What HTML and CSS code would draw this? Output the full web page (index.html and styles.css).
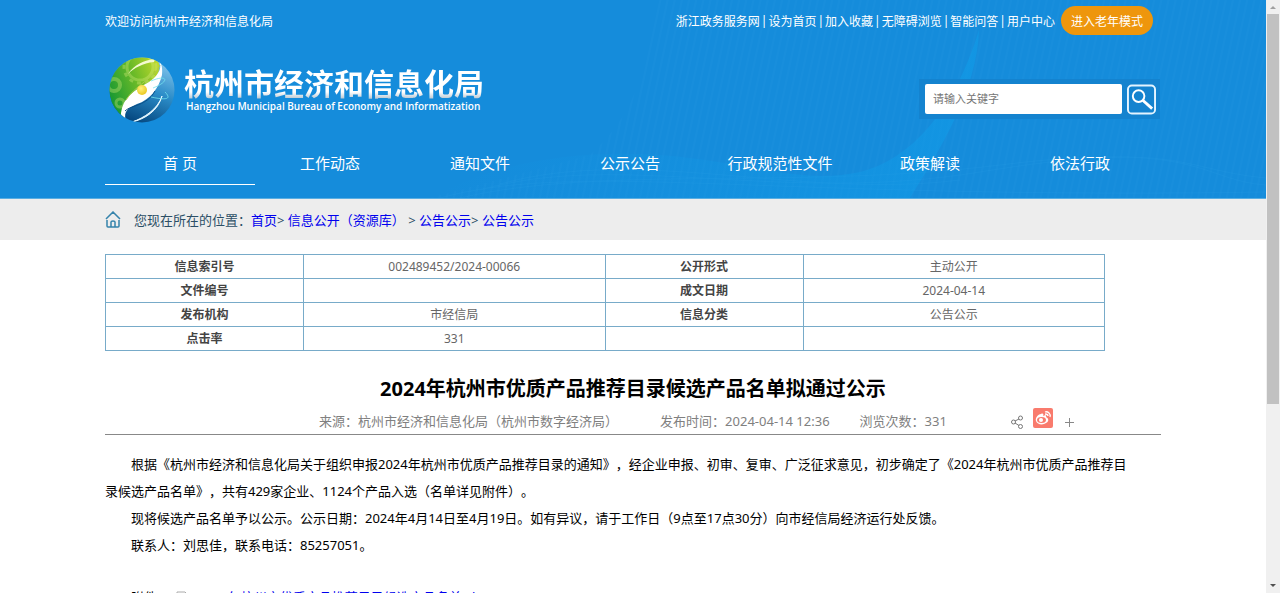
FILE: index.html
```html
<!DOCTYPE html>
<html lang="zh-CN">
<head>
    <meta charset="UTF-8">
    <meta name="viewport" content="width=device-width, initial-scale=1.0">
    <title>2024年杭州市优质产品推荐目录候选产品名单拟通过公示</title>
    <link rel="stylesheet" href="styles.css">
</head>
<body>
    <div class="page">
        <header class="header">
            <svg class="header-bg" viewBox="0 0 1266 198" preserveAspectRatio="xMaxYMid slice" aria-hidden="true">
                <defs>
                    <pattern id="lines" width="7" height="40" patternUnits="userSpaceOnUse" patternTransform="rotate(12)">
                        <path d="M2 0V40" stroke="#2a9ae4" stroke-width="2" opacity="0.12"/>
                    </pattern>
                    <linearGradient id="ribbon" x1="0" y1="0" x2="1" y2="0">
                        <stop offset="0" stop-color="#109ce8" stop-opacity="0"/>
                        <stop offset="0.6" stop-color="#109ce8" stop-opacity="0.3"/>
                        <stop offset="1" stop-color="#109ce8" stop-opacity="0.6"/>
                    </linearGradient>
                </defs>
                <path d="M655 0C648 60 640 110 590 155L430 198H1266V0Z" fill="url(#lines)"/>
                <path d="M430 198C500 160 580 150 660 155C750 162 800 185 860 172C910 160 955 110 979 30C977 90 940 150 910 198Z" fill="url(#ribbon)"/>
                <g fill="none" stroke="#30a4e8" stroke-width="1" opacity="0.15">
                    <path d="M440 198C580 160 760 200 1266 192"/>
                    <path d="M460 198C600 165 800 190 1000 165S1200 180 1266 185"/>
                    <path d="M480 190C620 150 780 205 980 172S1180 170 1266 178"/>
                    <path d="M500 184C640 145 800 200 960 180"/>
                </g>
            </svg>

            <div class="container header-inner">
                <div class="topbar">
                    <span>欢迎访问杭州市经济和信息化局</span>
                    <div class="toplinks">
                        <a href="#">浙江政务服务网</a><span class="sep">|</span>
                        <a href="#">设为首页</a><span class="sep">|</span>
                        <a href="#">加入收藏</a><span class="sep">|</span>
                        <a href="#">无障碍浏览</a><span class="sep">|</span>
                        <a href="#">智能问答</a><span class="sep">|</span>
                        <a href="#">用户中心</a>
                        <button type="button" class="old-btn">进入老年模式</button>
                    </div>
                </div>

                <div class="brand-row">
                    <a href="#" class="brand">
                        <svg class="logo" viewBox="0 0 66 66" aria-hidden="true">
                            <defs>
                                <clipPath id="ball"><circle cx="33" cy="33" r="32.5"/></clipPath>
                                <linearGradient id="green" x1="0" y1="0.5" x2="1" y2="0">
                                    <stop offset="0" stop-color="#1c9a32"/>
                                    <stop offset="0.5" stop-color="#6cbb28"/>
                                    <stop offset="1" stop-color="#c9dc2c"/>
                                </linearGradient>
                                <linearGradient id="blue" x1="0.8" y1="0" x2="0.4" y2="1">
                                    <stop offset="0" stop-color="#8dcbf0"/>
                                    <stop offset="0.5" stop-color="#2b8cc8"/>
                                    <stop offset="1" stop-color="#04467e"/>
                                </linearGradient>
                                <radialGradient id="sun" cx="0.4" cy="0.35" r="0.7">
                                    <stop offset="0" stop-color="#fff27a"/>
                                    <stop offset="1" stop-color="#e9c51c"/>
                                </radialGradient>
                            </defs>
                            <g clip-path="url(#ball)">
                                <rect width="66" height="66" fill="url(#blue)"/>
                                <path d="M0 0H46C54 8 50 19 42 25C28 34 14 40 14 62L0 66Z" fill="url(#green)"/>
                                <g fill="none" stroke="#d8ee7c" opacity="0.35">
                                    <circle cx="31" cy="10" r="13" stroke-width="3"/>
                                    <circle cx="31" cy="10" r="16" stroke-width="3" stroke-dasharray="4 4"/>
                                    <circle cx="5" cy="28" r="6" stroke-width="4"/>
                                    <circle cx="11" cy="46" r="4" stroke-width="3"/>
                                </g>
                                <path d="M46 1C57 8 49 19 40 25C24 34 14 41 12 56C12 61 14 64 18 66C14 57 16 52 28 47C41 43 50 31 53 18C54 9 52 4 46 1Z" fill="#fff"/>
                                <path d="M46 2C35 3 25 8 19 17C25 11 34 6 45 5Z" fill="#f4fad0"/>
                                <path d="M51 8C47 20 25 29 17 43" fill="none" stroke="#a9cc4c" stroke-width="1"/>
                                <path d="M16 54C22 48 38 49 46 34" fill="none" stroke="#0b4f87" stroke-width="1"/>
                                <path d="M53 39C49 52 35 61 23 65C36 62 49 54 53 39Z" fill="#e6f8ff" stroke="#e6f8ff" stroke-width="1"/>
                                <path d="M42 40C60 44 62 41 56 35M42 24C58 17 62 24 44 31" fill="none" stroke="#75e2ee" stroke-width="1" opacity="0.8"/>
                                <circle cx="33" cy="33" r="5" fill="url(#sun)"/>
                            </g>
                        </svg>
                        <span class="brand-text">
                            <span class="brand-name">杭州市经济和信息化局</span>
                            <span class="brand-en">Hangzhou Municipal Bureau of Economy and Informatization</span>
                        </span>
                    </a>

                    <form class="search">
                        <input type="text" class="search-input" placeholder="请输入关键字" aria-label="请输入关键字">
                        <button type="submit" class="search-btn" aria-label="搜索">
                            <svg viewBox="0 0 30 31" aria-hidden="true">
                                <rect x="1" y="1" width="28" height="29" rx="4" fill="none" stroke="#e4f4ff" stroke-width="2"/>
                                <circle cx="12" cy="12" r="6" fill="none" stroke="#fff" stroke-width="2"/>
                                <path d="M16 16L26 25" stroke="#fff" stroke-width="3"/>
                            </svg>
                        </button>
                    </form>
                </div>

                <nav class="nav">
                    <a href="#" class="active">首 页</a>
                    <a href="#">工作动态</a>
                    <a href="#">通知文件</a>
                    <a href="#">公示公告</a>
                    <a href="#">行政规范性文件</a>
                    <a href="#">政策解读</a>
                    <a href="#">依法行政</a>
                </nav>
            </div>
        </header>

        <div class="crumb-bar">
            <div class="container crumbs">
                <svg class="home" viewBox="0 0 16 17" aria-hidden="true">
                    <path d="M1 8L8 1L15 8M2 9V15Q2 16 3 16H13Q14 16 14 15V9M6 16V11Q6 10 8 10T10 11V16" fill="none" stroke="#3583ab" stroke-width="1.5"/>
                </svg>
                <span>您现在所在的位置：<a href="#">首页</a>&gt; <a href="#">信息公开（资源库）</a> &gt; <a href="#">公告公示</a>&gt; <a href="#">公告公示</a></span>
            </div>
        </div>

        <main class="container">
            <table class="info">
                <tr>
                    <th>信息索引号</th><td>002489452/2024-00066</td>
                    <th>公开形式</th><td>主动公开</td>
                </tr>
                <tr>
                    <th>文件编号</th><td></td>
                    <th>成文日期</th><td>2024-04-14</td>
                </tr>
                <tr>
                    <th>发布机构</th><td>市经信局</td>
                    <th>信息分类</th><td>公告公示</td>
                </tr>
                <tr>
                    <th>点击率</th><td>331</td>
                    <th></th><td></td>
                </tr>
            </table>

            <h1 class="title">2024年杭州市优质产品推荐目录候选产品名单拟通过公示</h1>
            <div class="meta">
                <div class="meta-text">
                    <span>来源：杭州市经济和信息化局（杭州市数字经济局）</span>
                    <span class="time">发布时间：2024-04-14 12:36</span>
                    <span>浏览次数：331</span>
                </div>
                <div class="share">
                    <a href="#" aria-label="分享">
                        <svg class="share-icon" viewBox="0 0 12 14" aria-hidden="true">
                            <g fill="none" stroke="#777" stroke-width="1">
                                <circle cx="2.5" cy="7" r="2"/>
                                <circle cx="9.5" cy="3" r="2"/>
                                <circle cx="9.5" cy="11.5" r="2"/>
                                <path d="M4 6L8 4M4 8L8 10.500"/>
                            </g>
                        </svg>
                    </a>
                    <a href="#" class="weibo" aria-label="微博">
                        <svg viewBox="0 0 20 20" aria-hidden="true">
                            <path d="M8 6C5 6 2 10 3 13C4 16 8 17 11 16C14 15 16 13 15 11C15 10 14 10 13 9C14 7 12 7 10 8C11 6 10 5 8 6Z" fill="#fff"/>
                            <ellipse cx="8.500" cy="12" rx="4.500" ry="3" fill="#f97b6d"/>
                            <circle cx="8" cy="12" r="2" fill="#fff"/>
                            <path d="M12 4C15 3 18 6 17 9M12 6C14 6 15 7 15 8" fill="none" stroke="#fff" stroke-width="1.300"/>
                        </svg>
                    </a>
                    <a href="#" aria-label="更多">
                        <svg class="plus" viewBox="0 0 9 10" aria-hidden="true">
                            <path d="M0 5.500H9M4.500 1V10" stroke="#888" stroke-width="1"/>
                        </svg>
                    </a>
                </div>
            </div>

            <article class="content">
                <p>根据《杭州市经济和信息化局关于组织申报2024年杭州市优质产品推荐目录的通知》，经企业申报、初审、复审、广泛征求意见，初步确定了《2024年杭州市优质产品推荐目录候选产品名单》，共有429家企业、1124个产品入选（名单详见附件）。</p>
                <p>现将候选产品名单予以公示。公示日期：2024年4月14日至4月19日。如有异议，请于工作日（9点至17点30分）向市经信局经济运行处反馈。</p>
                <p>联系人：刘思佳，联系电话：85257051。</p>
                <p class="attachment">附件：<svg class="file-icon" viewBox="0 0 14 16" aria-hidden="true"><path d="M2 1H10L13 4V15H2Z" fill="#fff" stroke="#aaa"/><rect y="2" width="9" height="10" fill="#82b96a"/></svg><a href="#">2024年杭州市优质产品推荐目录候选产品名单.xls</a></p>
            </article>
        </main>
    </div>

    <div class="scrollbar" aria-hidden="true">
        <svg class="arrow" viewBox="0 0 14 14"><path d="M4 9H10L7 6Z" fill="#a0a0a0"/></svg>
        <div class="track"><div class="thumb"></div></div>
        <svg class="arrow" viewBox="0 0 14 14"><path d="M4 5H10L7 8Z" fill="#505050"/></svg>
    </div>
</body>
</html>
```

FILE: styles.css
```css
* {
    box-sizing: border-box;
}
body {
    margin: 0;
    height: 100vh;
    overflow: hidden;
    display: flex;
    background-color: #fff;
    color: #000;
    font-family: "Noto Sans", "Noto Sans CJK SC", sans-serif;
    font-size: 13px;
    text-spacing-trim: space-all;
}
a {
    color: #0000ee;
    text-decoration: none;
}
svg {
    display: block;
}
.page {
    flex: 1;
    min-width: 0;
    overflow: hidden;
}
.container {
    max-width: 1056px;
    margin: 0 auto;
}

/* header */
.header {
    position: relative;
    background-color: #158cdb;
    border-bottom: 1px solid #5aaee2;
    color: #fff;
}
.header a {
    color: #fff;
}
.header-bg {
    position: absolute;
    top: 0;
    left: 0;
    width: 100%;
    height: 100%;
}
.header-inner {
    position: relative;
}
.topbar {
    display: flex;
    justify-content: space-between;
    align-items: center;
    height: 41px;
    padding-right: 8px;
    font-size: 12px;
}
.toplinks {
    display: flex;
    align-items: center;
}
.sep {
    margin: 0 1px;
}
.old-btn {
    height: 29px;
    margin-left: 6px;
    padding: 0 10px;
    border: none;
    border-radius: 15px;
    background-color: #ee960c;
    color: #fff;
    font-family: inherit;
    font-size: 12px;
    cursor: pointer;
}
.brand-row {
    display: flex;
    justify-content: space-between;
    align-items: center;
    height: 98px;
    padding: 0 1px 0 4px;
}
.brand {
    display: flex;
    align-items: center;
    gap: 9px;
}
.logo {
    width: 66px;
    height: 66px;
}
.brand-text {
    display: flex;
    flex-direction: column;
}
.brand-name {
    font-size: 30px;
    line-height: 32px;
    font-weight: bold;
    background: linear-gradient(#fff 75%, #bcc9d4 95%);
    background-clip: text;
    -webkit-background-clip: text;
    color: transparent;
}
.brand-en {
    padding-left: 2px;
    font-family: "Open Sans", sans-serif;
    font-size: 10px;
    line-height: 12px;
    font-weight: 600;
}
.search {
    display: flex;
    align-items: center;
    gap: 5px;
    height: 40px;
    margin-top: 18px;
    padding: 0 4px 0 6px;
    background-color: #1483cf;
}
.search-input {
    width: 197px;
    height: 30px;
    padding: 0 8px 2px;
    border: none;
    border-radius: 2px;
    background-color: #fff;
    font-family: inherit;
    font-size: 11px;
}
.search-input::placeholder {
    color: #757575;
}
.search-btn {
    width: 29px;
    height: 31px;
    padding: 0;
    border: none;
    background: none;
    cursor: pointer;
}
.search-btn svg {
    width: 100%;
    height: 100%;
}
.nav {
    display: flex;
    height: 59px;
    padding: 4px 6px 13px 0;
}
.nav a {
    flex: 1;
    border-bottom: 1px solid transparent;
    font-size: 15px;
    line-height: 40px;
    text-align: center;
}
.nav .active {
    border-bottom-color: #fff;
}

/* breadcrumb */
.crumb-bar {
    background-color: #ededed;
    color: #2c4f66;
}
.crumbs {
    display: flex;
    align-items: center;
    gap: 13px;
    height: 41px;
}
.home {
    width: 16px;
    height: 17px;
}

/* info table */
.info {
    width: 1000px;
    max-width: 100%;
    margin-top: 14px;
    border-collapse: collapse;
    table-layout: fixed;
    font-size: 12px;
    color: #666;
}
.info th,
.info td {
    height: 24px;
    padding: 0;
    border: 1px solid #78abc9;
    line-height: 22px;
    text-align: center;
}
.info th {
    width: 198px;
    color: #444;
}

/* article */
.title {
    margin: 24px 0 0;
    font-size: 20px;
    line-height: 28px;
    text-align: center;
}
.meta {
    display: grid;
    grid-template-columns: 1fr auto 1fr;
    align-items: center;
    height: 32px;
    border-bottom: 1px solid #888;
    color: #808080;
}
.meta-text {
    grid-column: 2;
    display: flex;
    gap: 30px;
    padding-top: 4px;
}
.time {
    margin-left: 12px;
}
.share {
    display: flex;
    align-items: center;
    gap: 10px;
    padding: 0 0 2px 64px;
}
.share-icon {
    width: 12px;
    height: 14px;
    margin-top: 9px;
}
.weibo {
    width: 20px;
    height: 20px;
    border-radius: 2px;
    background-color: #f97b6d;
}
.plus {
    width: 9px;
    height: 10px;
    margin: 8px 0 0 2px;
}
.content {
    padding: 16px 24px 0 0;
    line-height: 27px;
}
.content p {
    margin: 0;
    text-indent: 26px;
}
.content .attachment {
    margin-top: 25px;
}
.file-icon {
    display: inline-block;
    width: 14px;
    height: 16px;
    margin: 0 9px 0 5px;
    vertical-align: middle;
}

/* scrollbar */
.scrollbar {
    display: flex;
    flex-direction: column;
    width: 14px;
    background-color: #f0f0f0;
}
.arrow {
    width: 14px;
    height: 14px;
}
.track {
    flex: 1;
    padding: 0 1px;
}
.thumb {
    height: 69%;
    background-color: #c1c1c1;
}
```
